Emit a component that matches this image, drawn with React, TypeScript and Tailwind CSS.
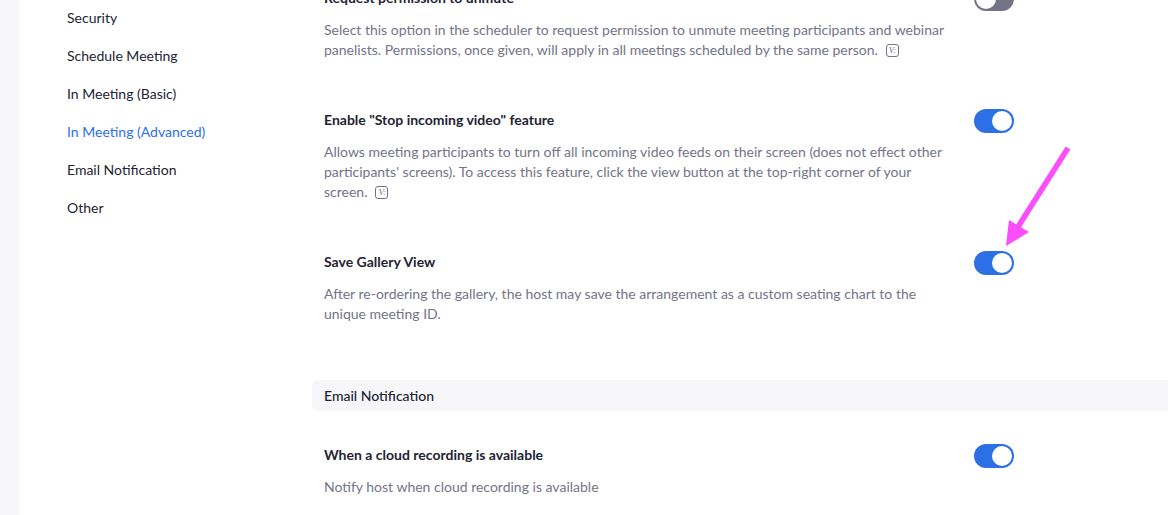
const navItems = ["Security", "Schedule Meeting", "In Meeting (Basic)", "In Meeting (Advanced)", "Email Notification", "Other"];

function Toggle({ on = true }: { on?: boolean }) {
  return (
    <div className={`flex h-6 w-10 shrink-0 items-center rounded-full p-0.5 ${on ? "justify-end bg-[#2d6fe4]" : "justify-start bg-[#747487]"}`}>
      <div className="size-5 rounded-full bg-white" />
    </div>
  );
}

function VanityIcon() {
  return (
    <span className="relative top-[-1px] -my-1 ml-2 inline-flex h-[13px] w-[13px] items-center justify-center rounded-[3px] border border-[#747487] align-middle font-['Liberation_Serif',serif] text-[9px] leading-none tracking-tighter text-[#747487] italic">
      V:
    </span>
  );
}

function SettingRow({ title, children, off, className = "" }: { title: string; children: React.ReactNode; off?: boolean; className?: string }) {
  return (
    <div className={`flex pl-3 ${className}`}>
      <div className="w-[650px]">
        <div className="text-[14px] leading-[22px] font-bold text-[#232333]">{title}</div>
        <div className="mt-[11px] w-[630px] text-[14px] leading-5 text-[#747487]">{children}</div>
      </div>
      <Toggle on={!off} />
    </div>
  );
}

export default function App() {
  return (
    <div className="relative flex h-[515px] w-[1168px] overflow-hidden bg-white font-['Lato',sans-serif]">
      <div className="w-[19px] shrink-0 bg-[#f7f7fa]" />
      <nav className="mt-[-1px] w-[293px] shrink-0 pl-12">
        {navItems.map((item) => (
          <div key={item} className={`text-[14px] leading-[38px] ${item === "In Meeting (Advanced)" ? "text-[#2d6fe4]" : "text-[#232333]"}`}>
            {item}
          </div>
        ))}
      </nav>
      <main className="mt-[-13px] flex-1">
        <SettingRow title="Request permission to unmute" off>
          Select this option in the scheduler to request permission to unmute meeting participants and webinar panelists. Permissions, once given, will apply in all meetings scheduled by the same person.
          <VanityIcon />
        </SettingRow>
        <SettingRow title={'Enable "Stop incoming video" feature'} className="mt-[49px]">
          Allows meeting participants to turn off all incoming video feeds on their screen (does not effect other participants' screens). To access this feature, click the view button at the top-right corner of your screen.
          <VanityIcon />
        </SettingRow>
        <SettingRow title="Save Gallery View" className="mt-[49px]">
          After re-ordering the gallery, the host may save the arrangement as a custom seating chart to the unique meeting ID.
        </SettingRow>
        <div className="mt-14 h-[31px] rounded-l-md bg-[#f7f7fa] pl-3 text-[14px] leading-[31px] font-medium text-[#232333]">Email Notification</div>
        <SettingRow title="When a cloud recording is available" className="mt-[33px]">
          Notify host when cloud recording is available
        </SettingRow>
      </main>
      <svg className="absolute top-0 left-0" width="1168" height="515" viewBox="0 0 1168 515" fill="none">
        <path d="M1068 148 L1016 230" stroke="#fb4dfb" strokeWidth="5.5" />
        <path d="M1006 246 L1009 220 L1029 232 Z" fill="#fb4dfb" />
      </svg>
    </div>
  );
}
